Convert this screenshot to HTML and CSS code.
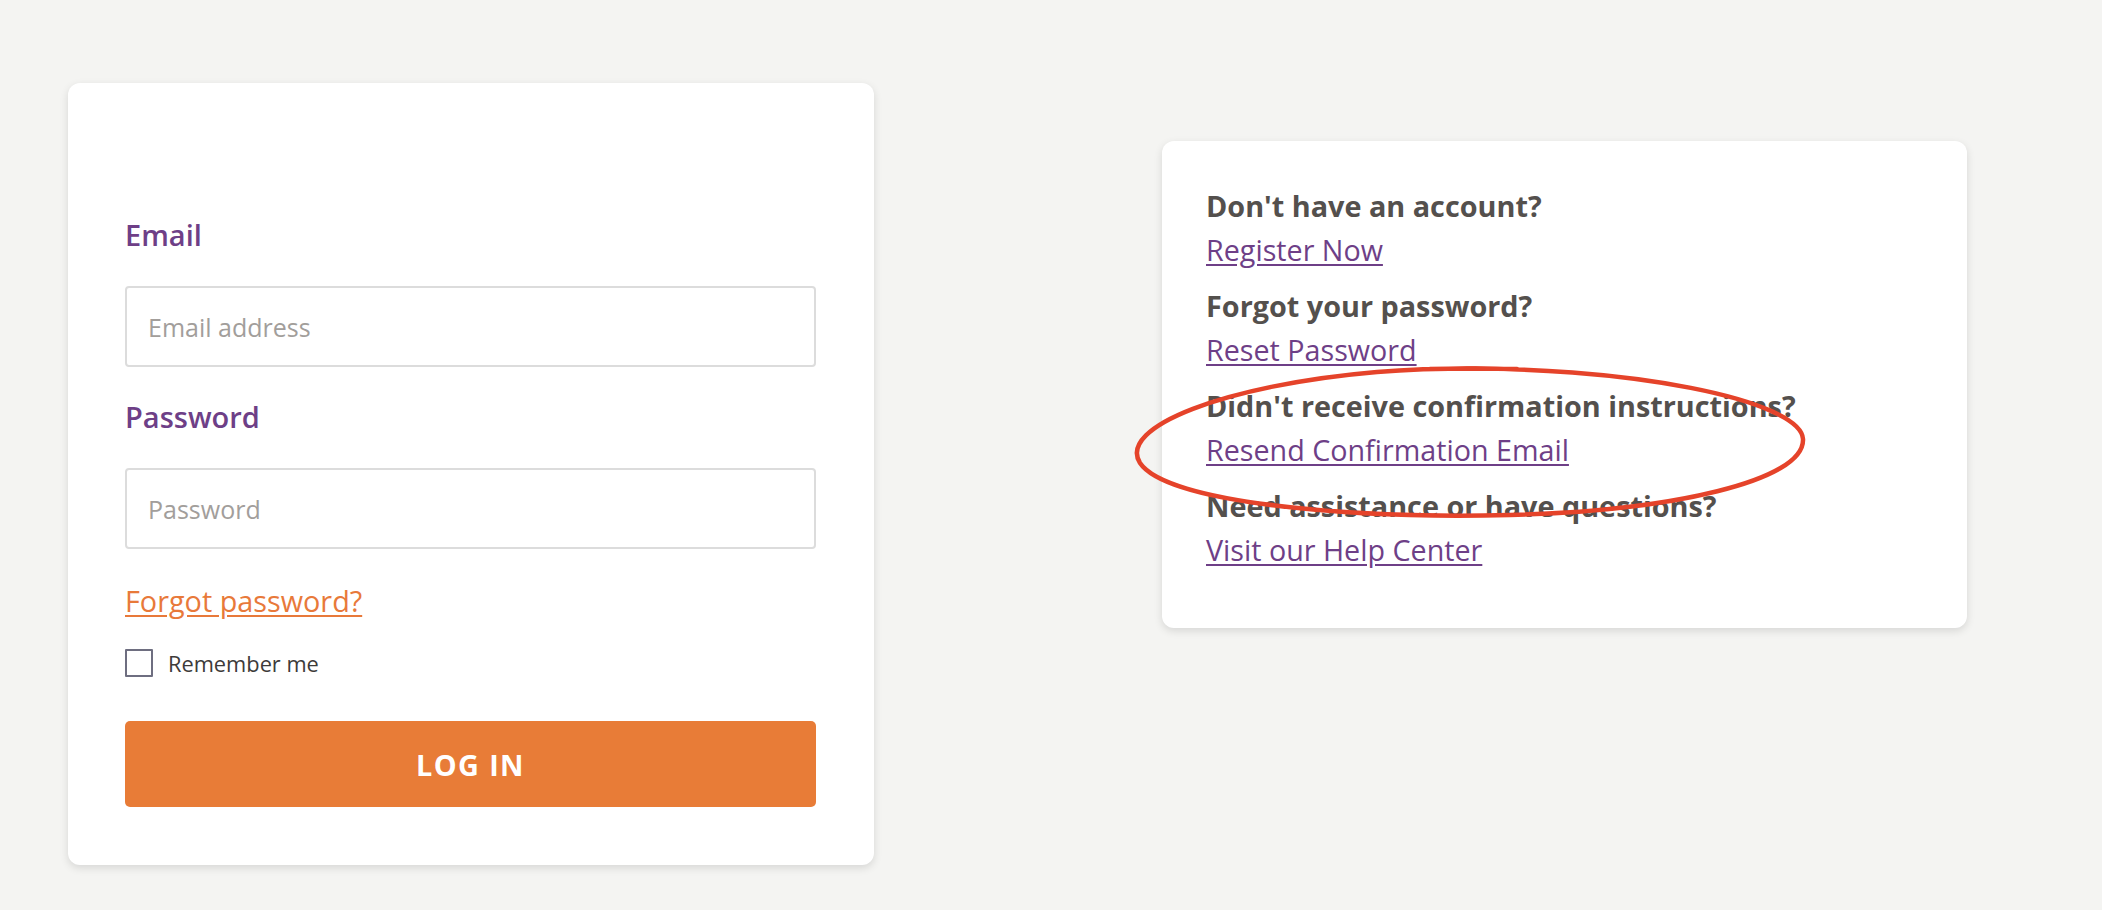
FILE: index.html
```html
<!DOCTYPE html>
<html lang="en">
<head>
    <meta charset="UTF-8">
    <meta name="viewport" content="width=device-width, initial-scale=1.0">
    <title>Log in</title>
    <link rel="stylesheet" href="styles.css">
</head>
<body>

    <div class="page">
        <form class="card login-card" onsubmit="return false">
            <label class="field-label" for="email">Email</label>
            <input id="email" class="field-input" type="email" placeholder="Email address">

            <label class="field-label" for="password">Password</label>
            <input id="password" class="field-input" type="password" placeholder="Password">

            <a class="forgot-link" href="#">Forgot password?</a>

            <label class="remember">
                <input type="checkbox" class="remember-box">
                <span>Remember me</span>
            </label>

            <button class="login-btn" type="submit">LOG IN</button>
        </form>

        <div class="card help-card">
            <div class="help-item">
                <h3>Don't have an account?</h3>
                <a href="#">Register Now</a>
            </div>
            <div class="help-item">
                <h3>Forgot your password?</h3>
                <a href="#">Reset Password</a>
            </div>
            <div class="help-item">
                <h3>Didn't receive confirmation instructions?</h3>
                <a href="#">Resend Confirmation Email</a>
            </div>
            <div class="help-item">
                <h3>Need assistance or have questions?</h3>
                <a href="#">Visit our Help Center</a>
            </div>

            <!-- hand drawn circle round the resend link -->
            <svg class="scribble" viewBox="0 0 690 164" width="690" height="164">
                <path d="M305 8 C505 3 676 40 678 78 C680 120 545 150 385 154 C225 158 42 142 15 102 C-8 66 100 24 252 11 C302 7 342 7 392 8"
                      fill="none" stroke="#e5432a" stroke-width="4.5" stroke-linecap="round"/>
            </svg>
        </div>
    </div>

</body>
</html>
```

FILE: styles.css
```css
body {
    margin: 0;
    height: 100vh;
    overflow: hidden;
    background: #f4f4f2;
    font-family: "Open Sans", Arial, sans-serif;
    color: #54504d;
}

.page {
    display: flex;
    align-items: flex-start;
    gap: 288px;
    padding: 83px 0 0 68px;
}

.card {
    background: #fff;
    border-radius: 12px;
    box-shadow: 0 3px 8px rgba(0, 0, 0, 0.12);
    box-sizing: border-box;
}

.login-card {
    width: 806px;
    padding: 132px 58px 58px 57px;
    display: flex;
    flex-direction: column;
}

.field-label {
    font-size: 29px;
    line-height: 40px;
    font-weight: 600;
    color: #6e3f87;
    margin-bottom: 31px;
}

.field-input {
    height: 81px;
    box-sizing: border-box;
    border: 2px solid #dcdcdc;
    border-radius: 4px;
    padding: 0 21px;
    font-family: inherit;
    font-size: 25px;
    color: #333;
    outline: none;
    margin-bottom: 30px;
}

.field-input::placeholder {
    color: #a29e9b;
}

.forgot-link {
    align-self: flex-start;
    font-size: 28.8px;
    line-height: 40px;
    color: #e8793a;
    text-decoration: underline;
    text-underline-offset: 3px;
    margin-top: 2px;
    margin-bottom: 27px;
}

.remember {
    display: flex;
    align-items: center;
    gap: 15px;
    font-size: 21.8px;
    color: #3d3b3a;
    height: 30px;
}

.remember-box {
    -webkit-appearance: none;
    appearance: none;
    width: 28px;
    height: 28px;
    margin: 0;
    border: 2px solid #6e6e80;
    border-radius: 1px;
    background: #fff;
}

.login-btn {
    margin-top: 43px;
    height: 86px;
    border: none;
    border-radius: 5px;
    background: #e87c37;
    color: #fff;
    font-family: inherit;
    font-size: 28.8px;
    font-weight: 700;
    letter-spacing: 1.4px;
    cursor: pointer;
}

.help-card {
    position: relative;
    width: 805px;
    margin-top: 58px;
    padding: 43px 44px 44px;
}

.help-item {
    margin-bottom: 12px;
}

.help-item h3 {
    margin: 0;
    font-size: 28.8px;
    line-height: 44px;
    font-weight: 700;
    color: #54504d;
}

.help-item a {
    font-size: 28.7px;
    line-height: 44px;
    color: #6e3f87;
    text-decoration: underline;
    text-underline-offset: 3px;
}

.scribble {
    position: absolute;
    left: -37px;
    top: 220px;
    pointer-events: none;
    overflow: visible;
}
```
